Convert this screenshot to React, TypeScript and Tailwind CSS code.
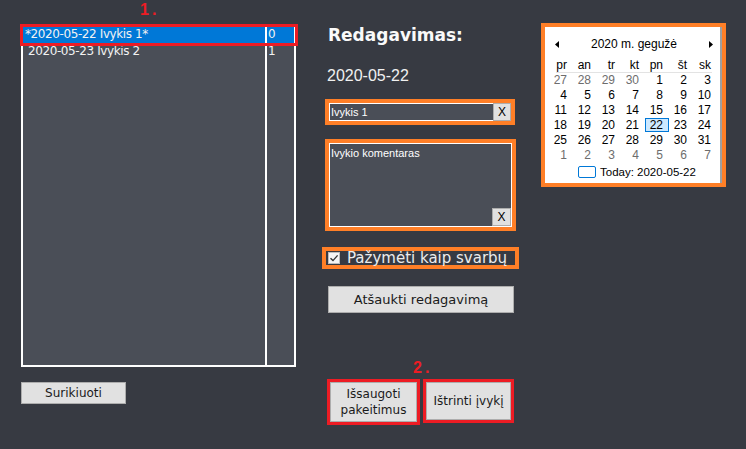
import React from "react";

const gothic = { fontFamily: '"DejaVu Sans", sans-serif' };
const ui = { fontFamily: '"Liberation Sans", Arial, sans-serif' };

const weeks: [string, boolean][][] = [
  [["27", true], ["28", true], ["29", true], ["30", true], ["1", false], ["2", false], ["3", false]],
  [["4", false], ["5", false], ["6", false], ["7", false], ["8", false], ["9", false], ["10", false]],
  [["11", false], ["12", false], ["13", false], ["14", false], ["15", false], ["16", false], ["17", false]],
  [["18", false], ["19", false], ["20", false], ["21", false], ["22", false], ["23", false], ["24", false]],
  [["25", false], ["26", false], ["27", false], ["28", false], ["29", false], ["30", false], ["31", false]],
  [["1", true], ["2", true], ["3", true], ["4", true], ["5", true], ["6", true], ["7", true]],
];

const dayNames = ["pr", "an", "tr", "kt", "pn", "št", "sk"];

function Calendar() {
  return (
    <div className="ml-[22px] mt-[23px] w-[185px] h-[164px] border-4 border-[#ff7f27] bg-white flex flex-col text-[12px] text-black" style={ui}>
      <div className="flex-1 flex flex-col border-r-2 border-[#a0a0a0]">
        <div className="mt-[9px] h-[16px] flex items-center justify-between pl-[10px] pr-[7px]">
          <svg width="4" height="7" viewBox="0 0 4 7"><path d="M4 0 L0 3.5 L4 7 Z" fill="#000" /></svg>
          <span className="leading-[16px]">2020 m. gegužė</span>
          <svg width="4" height="7" viewBox="0 0 4 7"><path d="M0 0 L4 3.5 L0 7 Z" fill="#000" /></svg>
        </div>
        <div className="mt-[6px] pl-[4px] grid grid-cols-[repeat(7,24px)] h-[14px]">
          {dayNames.map((d) => (
            <div key={d} className="text-right pr-[6px] leading-[14px]">{d}</div>
          ))}
        </div>
        <div className="ml-[11px] w-[156px] h-px bg-[#e3e3e3]" />
        {weeks.map((w, i) => (
          <div key={i} className="pl-[4px] grid grid-cols-[repeat(7,24px)] h-[15px]">
            {w.map(([d, gray], j) =>
              i === 3 && j === 4 ? (
                <div key={j} className="h-[14px] bg-[#cce8ff] border border-[#0078d7] text-right pr-[5px] leading-[12px]">
                  {d}
                </div>
              ) : (
                <div key={j} className={`text-right pr-[6px] leading-[15px] ${gray ? "text-[#6d6d6d]" : "text-black"}`}>
                  {d}
                </div>
              )
            )}
          </div>
        ))}
        <div className="mt-[1px] h-[16px] flex items-center">
          <div className="ml-[33px] w-[18px] h-[12px] border border-[#0078d7] rounded-[2px]" />
          <span className="ml-[4px] text-[11.5px] leading-[16px]">Today: 2020-05-22</span>
        </div>
      </div>
    </div>
  );
}

function GrayButton({ children, className }: { children: React.ReactNode; className: string }) {
  return (
    <div className={`bg-[#e1e1e1] border border-[#adadad] flex items-center justify-center text-center text-[#1a1a1a] ${className}`} style={gothic}>
      {children}
    </div>
  );
}

export default function App() {
  return (
    <div className="relative w-[746px] h-[449px] bg-[#373a42] flex items-start overflow-hidden">
      {/* Left column */}
      <div className="flex flex-col pl-[21px] pt-[24px]">
        <div className="w-[275px] h-[343px] border-2 border-white bg-[#4a4e57] flex text-[12px] text-[#f2f2f2] tracking-[-0.4px]" style={gothic}>
          <div className="w-[244px] border-r-2 border-white flex flex-col">
            <div className="h-[17px] bg-[#0078d7] pl-[2px] leading-[17px]">*2020-05-22 Ivykis 1*</div>
            <div className="h-[17px] pl-[5px] leading-[17px]">2020-05-23 Ivykis 2</div>
          </div>
          <div className="flex-1 flex flex-col">
            <div className="h-[17px] bg-[#0078d7] pl-[1px] leading-[17px]">0</div>
            <div className="h-[17px] pl-[1px] leading-[17px]">1</div>
          </div>
        </div>
        <GrayButton className="mt-[15px] w-[105px] h-[22px] text-[12px]">Surikiuoti</GrayButton>
      </div>

      {/* Center column */}
      <div className="ml-[26px] w-[197px] flex flex-col">
        <div className="mt-[25px] ml-[6px] h-[20px] leading-[20px] text-[17px] font-bold text-[#fafafa]" style={gothic}>
          Redagavimas:
        </div>
        <div className="mt-[21px] ml-[5px] h-[20px] leading-[20px] text-[16px] text-[#f0f0f0]" style={ui}>
          2020-05-22
        </div>
        <div className="mt-[13px] ml-[3px] w-[190px] h-[26px] border-4 border-[#ff7f27] flex" style={ui}>
          <div className="flex-1 bg-[#4a4e57] border-y border-l border-white text-white text-[11px] leading-[16px] pl-[1px]">
            Ivykis 1
          </div>
          <div className="w-[18px] bg-[#e1e1e1] border border-[#adadad] flex items-center justify-center text-[12px] text-black">X</div>
        </div>
        <div className="mt-[14px] ml-[3px] w-[191px] h-[92px] border-4 border-[#ff7f27]" style={ui}>
          <div className="h-full bg-[#4a4e57] border border-white flex flex-col text-white text-[11px] leading-[14px]">
            <div className="pl-[1px] pt-[2px] flex-1">Ivykio komentaras</div>
            <div className="self-end w-[19px] h-[18px] bg-[#e1e1e1] border border-[#adadad] flex items-center justify-center text-[12px] text-black">X</div>
          </div>
        </div>
        <div className="mt-[16px] w-[197px] h-[22px] border-4 border-[#ff7f27] flex items-center">
          <div className="ml-[2px] w-[12px] h-[12px] bg-[#f4f4f4] border border-[#bcbcbc] flex items-center justify-center">
            <svg width="10" height="10" viewBox="0 0 10 10">
              <path d="M1.5 5.2 L4 7.6 L8.6 2.4" fill="none" stroke="#333" strokeWidth="1.4" />
            </svg>
          </div>
          <span className="ml-[7px] text-[15px] leading-[14px] text-[#ececec] whitespace-nowrap" style={gothic}>
            Pažymėti kaip svarbų
          </span>
        </div>
        <GrayButton className="mt-[17px] ml-[6px] w-[186px] h-[27px] text-[13px]">Atšaukti redagavimą</GrayButton>
        <div className="mt-[66px] ml-[5px] flex items-start gap-[3px]">
          <div className="w-[93px] h-[46px] border-[3px] border-[#ed1c24]">
            <GrayButton className="w-full h-full text-[12px] leading-[16px]">
              Išsaugoti<br />pakeitimus
            </GrayButton>
          </div>
          <div className="w-[91px] h-[44px] border-[3px] border-[#ed1c24]">
            <GrayButton className="w-full h-full text-[12px]">Ištrinti įvykį</GrayButton>
          </div>
        </div>
      </div>

      <Calendar />

      {/* Annotations */}
      <div className="absolute left-[20px] top-[24px] w-[278px] h-[22px] border-[3px] border-[#ed1c24]" />
      <div className="absolute left-[140px] top-[1px] text-[16px] font-bold text-[#ed1c24] tracking-[3px] leading-[18px]" style={ui}>1.</div>
      <div className="absolute left-[413px] top-[359px] text-[16px] font-bold text-[#ed1c24] tracking-[3px] leading-[18px]" style={ui}>2.</div>
    </div>
  );
}
